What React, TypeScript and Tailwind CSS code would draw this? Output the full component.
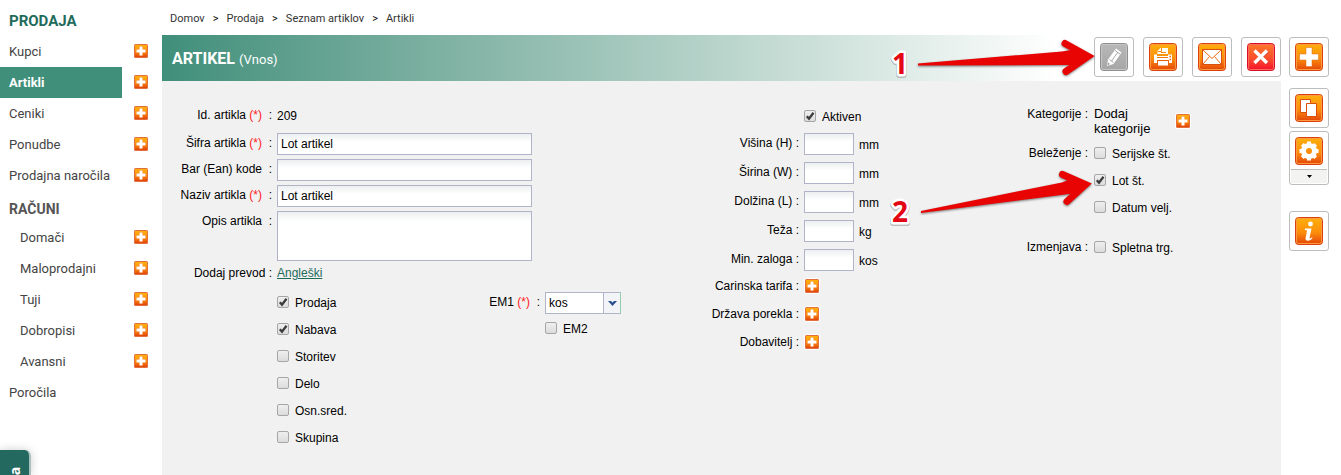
import React from 'react';

interface PlusButtonProps {
  label: string;
  outlined?: boolean;
}

const PlusButton: React.FC<PlusButtonProps> = ({ label, outlined }) => (
  <button
    type="button"
    aria-label={label}
    className={`block w-[14px] h-[14px] shrink-0 rounded-[2px] ${outlined ? 'ring-1 ring-white' : ''}`}
  >
    <svg viewBox="0 0 14 14" className="w-full h-full block">
      <rect width="14" height="14" rx="1.5" fill="#e2703f" />
      <rect x="1" y="1" width="12" height="12" fill="url(#orange)" />
      <path d="M5 2h4v3h3v4H9v3H5V9H2V5h3z" fill="#e8650c" opacity="0.5" />
      <path d="M5.500 2.500h3v3h3v3h-3v3h-3v-3h-3v-3h3z" fill="#fff" />
    </svg>
  </button>
);

interface CheckProps {
  label: string;
  checked?: boolean;
}

const Check: React.FC<CheckProps> = ({ label, checked }) => (
  <label className="flex items-center gap-[5px] h-[27px]">
    <span className="grid w-[13px] h-[13px]">
      <input
        type="checkbox"
        defaultChecked={checked}
        className="peer [grid-area:1/1] appearance-none w-[12px] h-[12px] rounded-[2px] border border-[#a6a6a6] bg-linear-to-b from-[#efefef] to-[#dcdcdc]"
      />
      <svg viewBox="0 0 12 12" className="hidden peer-checked:block pointer-events-none [grid-area:1/1] w-[12px] h-[12px]">
        <path d="M2.800 6.200 5 8.600 9.500 2.800" fill="none" stroke="#3c3c3c" strokeWidth="2.300" />
      </svg>
    </span>
    {label}
  </label>
);

const Required = () => <span className="text-[#ff1a1a]">(*)</span>;

interface FieldProps {
  id?: string;
  label: string;
  required?: boolean;
  wide?: boolean;
  children: React.ReactNode;
}

// Right aligned label, colon and the control
const Field: React.FC<FieldProps> = ({ id, label, required, wide, children }) => (
  <div className="flex gap-[5px]">
    <label htmlFor={id} className="w-[110px] shrink-0 text-right leading-[20px] whitespace-pre">
      {label} {required && <Required />}
      {required ? '  :' : wide ? ' :' : ':'}
    </label>
    {children}
  </div>
);

const inputClass =
  'h-[22px] border border-[#b1b4c9] bg-linear-to-b from-[#eceff0] to-white to-40% px-[3px] text-[12px] outline-none';

const TextField = ({ id, label, required, value }: { id: string; label: string; required?: boolean; value?: string }) => (
  <Field id={id} label={label} required={required} wide>
    <input id={id} type="text" defaultValue={value} className={`${inputClass} w-[255px]`} />
  </Field>
);

const SmallField = ({ id, label, unit }: { id: string; label: string; unit: string }) => (
  <div className="flex gap-[5px] h-[22px]">
    <label htmlFor={id} className="w-[109px] text-right leading-[20px]">
      {label} :
    </label>
    <input id={id} type="text" className={`${inputClass} w-[50px]`} />
    <span className="leading-[24px]">{unit}</span>
  </div>
);

type Tone = 'orange' | 'gray' | 'red';

const borders: Record<Tone, string> = { orange: '#d9400f', gray: '#8f8f8f', red: '#d6102a' };
const rims: Record<Tone, string> = { orange: '#ff9b3d', gray: '#c4c4c4', red: '#ff6a5a' };

interface ToolButtonProps {
  label: string;
  tone?: Tone;
  menu?: boolean;
  children: React.ReactNode;
}

const ToolButton: React.FC<ToolButtonProps> = ({ label, tone = 'orange', menu, children }) => (
  <button
    type="button"
    aria-label={label}
    className="w-[40px] rounded-[3px] border border-[#bdbdbd] bg-[#f3f4f1] p-px shadow-[inset_0_0_0_1px_#fff]"
  >
    <span className="flex justify-center items-center h-[36px] bg-white">
      <svg viewBox="0 0 28 28" className="w-[28px] h-[28px]">
        <rect x="0.5" y="0.5" width="27" height="27" rx="3" fill={`url(#${tone})`} stroke={borders[tone]} />
        <rect x="1.500" y="1.500" width="25" height="25" rx="2" fill="none" stroke={rims[tone]} />
        {children}
      </svg>
    </span>
    {menu && (
      <span className="flex justify-center items-center h-[14px] border-t border-[#bdbdbd]">
        <svg viewBox="0 0 5 3" className="w-[5px] h-[3px]">
          <path d="M0 0h5L2.500 3z" fill="#000" />
        </svg>
      </span>
    )}
  </button>
);

const Gradients = () => (
  <svg className="absolute w-0 h-0" aria-hidden="true">
    <defs>
      <linearGradient id="orange" x1="0" y1="0" x2="0" y2="1">
        <stop offset="0" stopColor="#ffb00c" />
        <stop offset="0.55" stopColor="#fc8e0b" />
        <stop offset="1" stopColor="#e2430a" />
      </linearGradient>
      <linearGradient id="gray" x1="0" y1="0" x2="0" y2="1">
        <stop offset="0" stopColor="#b8b8b8" />
        <stop offset="1" stopColor="#a6a6a6" />
      </linearGradient>
      <linearGradient id="red" x1="0" y1="0" x2="0" y2="1">
        <stop offset="0" stopColor="#ff7a2a" />
        <stop offset="0.6" stopColor="#fb4a2c" />
        <stop offset="1" stopColor="#f4102c" />
      </linearGradient>
    </defs>
  </svg>
);

interface MenuItem {
  name: string;
  add?: boolean;
  nested?: boolean;
  active?: boolean;
}

const salesItems: MenuItem[] = [
  { name: 'Kupci', add: true },
  { name: 'Artikli', add: true, active: true },
  { name: 'Ceniki', add: true },
  { name: 'Ponudbe', add: true },
  { name: 'Prodajna naročila', add: true },
];

const invoiceItems: MenuItem[] = [
  { name: 'Domači', add: true, nested: true },
  { name: 'Maloprodajni', add: true, nested: true },
  { name: 'Tuji', add: true, nested: true },
  { name: 'Dobropisi', add: true, nested: true },
  { name: 'Avansni', add: true, nested: true },
  { name: 'Poročila' },
];

const MenuList = ({ items }: { items: MenuItem[] }) => (
  <ul>
    {items.map((item) => (
      <li key={item.name} className="flex items-start h-[31px] gap-[12px]">
        <a
          href="#"
          className={`w-[122px] h-full leading-[31px] whitespace-nowrap ${item.nested ? 'pl-[20px]' : 'pl-[9px]'} ${
            item.active ? 'bg-[#3f8f7b] text-white font-bold' : ''
          }`}
        >
          {item.name}
        </a>
        {item.add && (
          <div className="pt-[8px]">
            <PlusButton label={`Dodaj: ${item.name}`} />
          </div>
        )}
      </li>
    ))}
  </ul>
);

const Sidebar = () => (
  <nav className="w-[162px] shrink-0 font-[Roboto,sans-serif] text-[13px] text-[#444]">
    <h2 className="h-[36px] pt-[11px] pl-[9px] text-[15px] leading-[20px] font-bold text-[#1f6b5c]">PRODAJA</h2>
    <MenuList items={salesItems} />
    <h2 className="h-[31px] pt-[8px] pl-[9px] text-[14px] leading-[20px] font-bold text-[#555]">RAČUNI</h2>
    <MenuList items={invoiceItems} />
  </nav>
);

const crumbs = ['Domov', 'Prodaja', 'Seznam artiklov', 'Artikli'];

const Breadcrumb = () => (
  <div className="flex items-center gap-[8px] h-[35px] pt-[3px] pl-[8px] font-[Roboto,sans-serif] text-[11px] text-[#333]">
    {crumbs.map((crumb, idx) => (
      <React.Fragment key={crumb}>
        {idx > 0 && <span className="text-black">&gt;</span>}
        <a href="#">{crumb}</a>
      </React.Fragment>
    ))}
  </div>
);

const Toolbar = () => (
  <div className="flex gap-[9px]">
    <ToolButton label="Uredi" tone="gray">
      <path d="M7 23 8 16.500 16 5.500l5.500 4-8 11.500z" fill="#fff" />
      <path d="m9.500 16.500 4 3M15 7.500l5 3.500M11.500 18l6.500-9" stroke="#a8a8a8" fill="none" />
      <path d="m7.500 22.500.5-3 2 1.500z" fill="#999" />
    </ToolButton>
    <ToolButton label="Natisni">
      <path d="M8.500 11V8l3-3H19v6z" fill="#fff" />
      <path d="M12.500 5v3.500H9M12 9.500h5" fill="none" stroke="#f58a14" />
      <path d="M5 11.500h3V13h11v-1.500h4V20h-3v-3H8v3H5z" fill="#fff" />
      <path d="M8 14.500h11" stroke="#ee7a10" />
      <path d="M8.500 17.500h11V23h-11z" fill="#fff" stroke="#e8600c" />
      <path d="M20.500 13.500h1.500M20.500 16.500h1.500" stroke="#e8600c" strokeWidth="1.500" />
    </ToolButton>
    <ToolButton label="Pošlji">
      <rect x="4.500" y="6.500" width="19" height="15" fill="#fff" stroke="#d9500c" />
      <path d="m5 7 9 8.500L23 7M5 21l6.500-7.500M23 21l-6.500-7.500" fill="none" stroke="#ea6a10" />
    </ToolButton>
    <ToolButton label="Zapri" tone="red">
      <path d="m8 8 12.500 12.500M20.500 8 8 20.500" stroke="#b3121c" strokeWidth="3.500" opacity="0.5" />
      <path d="m7.500 7.500 12.500 12.500M20 7.500 7.500 20" stroke="#fff" strokeWidth="3.500" />
    </ToolButton>
  </div>
);

const ActionRail = () => (
  <aside className="flex flex-col items-start w-[60px] shrink-0 pl-[8px] pt-[37px]">
    <ToolButton label="Nov">
      <path d="M11 4.500h6V11h6.500v6H17v6.500h-6V17H4.500v-6H11z" fill="#fff" stroke="#e06a10" strokeWidth="0.5" />
    </ToolButton>
    <div className="flex flex-col gap-[3px] pt-[11px]">
      <ToolButton label="Kopiraj">
        <path d="M5.500 5.500h10v13h-10z" fill="#fff" stroke="#d9500c" />
        <path d="M11.500 9.500h10v13h-10z" fill="#fff" stroke="#d9500c" />
      </ToolButton>
      <ToolButton label="Nastavitve" menu>
        <circle cx="14" cy="14" r="5.500" fill="none" stroke="#fff" strokeWidth="5" />
        <path
          d="M14 4.500v4M14 19.500v4M4.500 14h4M19.500 14h4M7.300 7.300l2.800 2.800M17.900 17.900l2.800 2.800M20.700 7.300l-2.800 2.800M10.100 17.900l-2.800 2.800"
          stroke="#fff"
          strokeWidth="4"
        />
      </ToolButton>
    </div>
    <div className="pt-[26px]">
      <ToolButton label="Informacije">
        <circle cx="15.500" cy="7" r="2.400" fill="#fff" />
        <path d="M10 11.500h6.500l-2 9.500c0 .8 1.500.3 2.500-.8l.5.800c-2 3-7 4-7 .5l1.500-7.500c.2-1-.8-1-2.200-1z" fill="#fff" />
      </ToolButton>
    </div>
  </aside>
);

const ItemColumn = () => (
  <div className="pt-[24px]">
    <div className="h-[28px]">
      <Field label="Id. artikla" required>
        <span className="leading-[22px]">209</span>
      </Field>
    </div>
    <div className="flex flex-col gap-[4px]">
      <TextField id="code" label="Šifra artikla" required value="Lot artikel" />
      <TextField id="ean" label="Bar (Ean) kode" />
      <TextField id="name" label="Naziv artikla" required value="Lot artikel" />
      <Field id="description" label="Opis artikla" wide>
        <textarea
          id="description"
          className="block w-[255px] h-[50px] resize-none border border-[#b1b4c9] bg-linear-to-b from-[#eceff0] to-white to-20% outline-none"
        />
      </Field>
    </div>
    <div className="pt-[2px]">
      <Field label="Dodaj prevod">
        <a href="#" className="leading-[20px] text-[#1f6b5c] underline">
          Angleški
        </a>
      </Field>
    </div>
    <div className="flex pl-[115px] pt-[6px]">
      <div className="w-[153px]">
        <Check label="Prodaja" checked />
        <Check label="Nabava" checked />
        <Check label="Storitev" />
        <Check label="Delo" />
        <Check label="Osn.sred." />
        <Check label="Skupina" />
      </div>
      <div className="pt-[3px]">
        <Field id="unit" label="EM1" required>
          <span className="grid h-[22px] w-[76px]">
            <select
              id="unit"
              className="[grid-area:1/1] appearance-none border border-[#b1b4c9] bg-white px-[3px] text-[12px] outline-none"
            >
              <option>kos</option>
            </select>
            <span className="pointer-events-none [grid-area:1/1] justify-self-end flex items-center justify-center w-[18px] border border-[#b1b4c9] border-r-[#93cfaa] bg-[#f3f4f7]">
              <svg viewBox="0 0 9 5" className="w-[9px] h-[5px]">
                <path d="M0 0h3l1.500 1.500L6 0h3L4.500 5z" fill="#2c4f8f" />
              </svg>
            </span>
          </span>
        </Field>
        <div className="pl-[115px] pt-px">
          <Check label="EM2" />
        </div>
      </div>
    </div>
  </div>
);

const MeasureColumn = () => (
  <div className="pt-[22px]">
    <div className="pl-[114px]">
      <Check label="Aktiven" checked />
    </div>
    <div className="flex flex-col gap-[7px] pt-[3px]">
      <SmallField id="height" label="Višina (H)" unit="mm" />
      <SmallField id="width" label="Širina (W)" unit="mm" />
      <SmallField id="length" label="Dolžina (L)" unit="mm" />
      <SmallField id="weight" label="Teža" unit="kg" />
      <SmallField id="stock" label="Min. zaloga" unit="kos" />
    </div>
    <div className="flex flex-col pt-px">
      {['Carinska tarifa', 'Država porekla', 'Dobavitelj'].map((name) => (
        <div key={name} className="flex items-center gap-[6px] h-[28px]">
          <span className="w-[109px] text-right">{name} :</span>
          <PlusButton label={name} outlined />
        </div>
      ))}
    </div>
  </div>
);

const CategoryColumn = () => (
  <div className="pt-[23px]">
    <div className="flex gap-[6px] h-[36px]">
      <span className="w-[84px] text-right leading-[20px]">Kategorije :</span>
      <span className="w-[76px] pt-[2px] text-[13px] leading-[15px]">Dodaj kategorije</span>
      <div className="pt-[10px]">
        <PlusButton label="Dodaj kategorije" outlined />
      </div>
    </div>
    <div className="flex gap-[6px]">
      <span className="w-[84px] text-right leading-[26px]">Beleženje :</span>
      <div>
        <Check label="Serijske št." />
        <Check label="Lot št." checked />
        <Check label="Datum velj." />
      </div>
    </div>
    <div className="flex gap-[6px] pt-[13px]">
      <span className="w-[84px] text-right leading-[26px]">Izmenjava :</span>
      <Check label="Spletna trg." />
    </div>
  </div>
);

const Marker = ({ value, y }: { value: string; y: number }) => (
  <g className="font-['Open_Sans',sans-serif] text-[28px] font-bold">
    <text x="11" y={y + 1} textAnchor="middle" fill="#888" stroke="#999" strokeWidth="6" strokeLinejoin="round" opacity="0.6">
      {value}
    </text>
    <text x="11" y={y} textAnchor="middle" fill="#e30613" stroke="#fff" strokeWidth="5" strokeLinejoin="round" paintOrder="stroke">
      {value}
    </text>
  </g>
);

// Tapered shaft plus a round-ended chevron head
const Arrow = ({ shaft, head }: { shaft: string; head: string }) => (
  <g className="drop-shadow-[0_1px_1px_rgba(0,0,0,0.5)]">
    <path d={shaft} fill="#e90404" />
    <path d={head} fill="none" stroke="#e90404" strokeWidth="7" strokeLinecap="round" strokeMiterlimit="8" />
  </g>
);

// Numbered arrows on top of the form, kept at the right edge next to their targets
const Arrows = () => (
  <svg
    viewBox="0 0 210 200"
    className="absolute right-[182px] top-0 w-[210px] h-[200px] overflow-visible pointer-events-none"
  >
    <Marker value="1" y={39} />
    <Arrow shaft="M29 28.500 173 16.500 188 14 199 21.300 188 30 180 30 29 30.500z" head="M176 8.500 199 21.300 177 36.500" />
    <Marker value="2" y={187} />
    <Arrow shaft="M32 176 173 147.500 184 143 196.500 149.500 187 159 180 159 32 178z" head="M173.500 139.500 196.500 149.500 178 166.500" />
  </svg>
);

export default function App() {
  return (
    <div className="relative flex min-h-screen bg-white text-black">
      <Gradients />
      <Sidebar />
      <main className="flex flex-col flex-1 min-w-0">
        <Breadcrumb />
        <div className="relative flex flex-col flex-1">
          <header className="flex justify-between items-start h-[46px] pt-[2px] pl-[10px] bg-linear-to-r from-[#3f8f7b] to-white to-80% font-[Roboto,sans-serif] text-white">
            <h1 className="leading-[43px] text-[16px] font-bold">
              ARTIKEL <span className="text-[13px] font-normal">(Vnos)</span>
            </h1>
            <Toolbar />
          </header>
          <form className="grid grid-cols-[528fr_314fr_277fr] items-start flex-1 bg-[#f1f1f1] font-['Liberation_Sans',Arial,sans-serif] text-[12px]">
            <ItemColumn />
            <MeasureColumn />
            <CategoryColumn />
          </form>
          <Arrows />
        </div>
      </main>
      <ActionRail />
      <button
        type="button"
        className="absolute left-0 bottom-0 flex items-start justify-center w-[31px] h-[25px] pt-[15px] overflow-hidden rounded-tr-[6px] border-r-2 border-[#a9c2bd] bg-[#24695f] shadow-[0_0_10px_rgba(0,0,0,0.2)] text-white"
      >
        <span className="-rotate-90 w-[12px] h-[12px] text-[14px] leading-[12px] font-bold font-['Open_Sans',sans-serif]">a</span>
      </button>
    </div>
  );
}
